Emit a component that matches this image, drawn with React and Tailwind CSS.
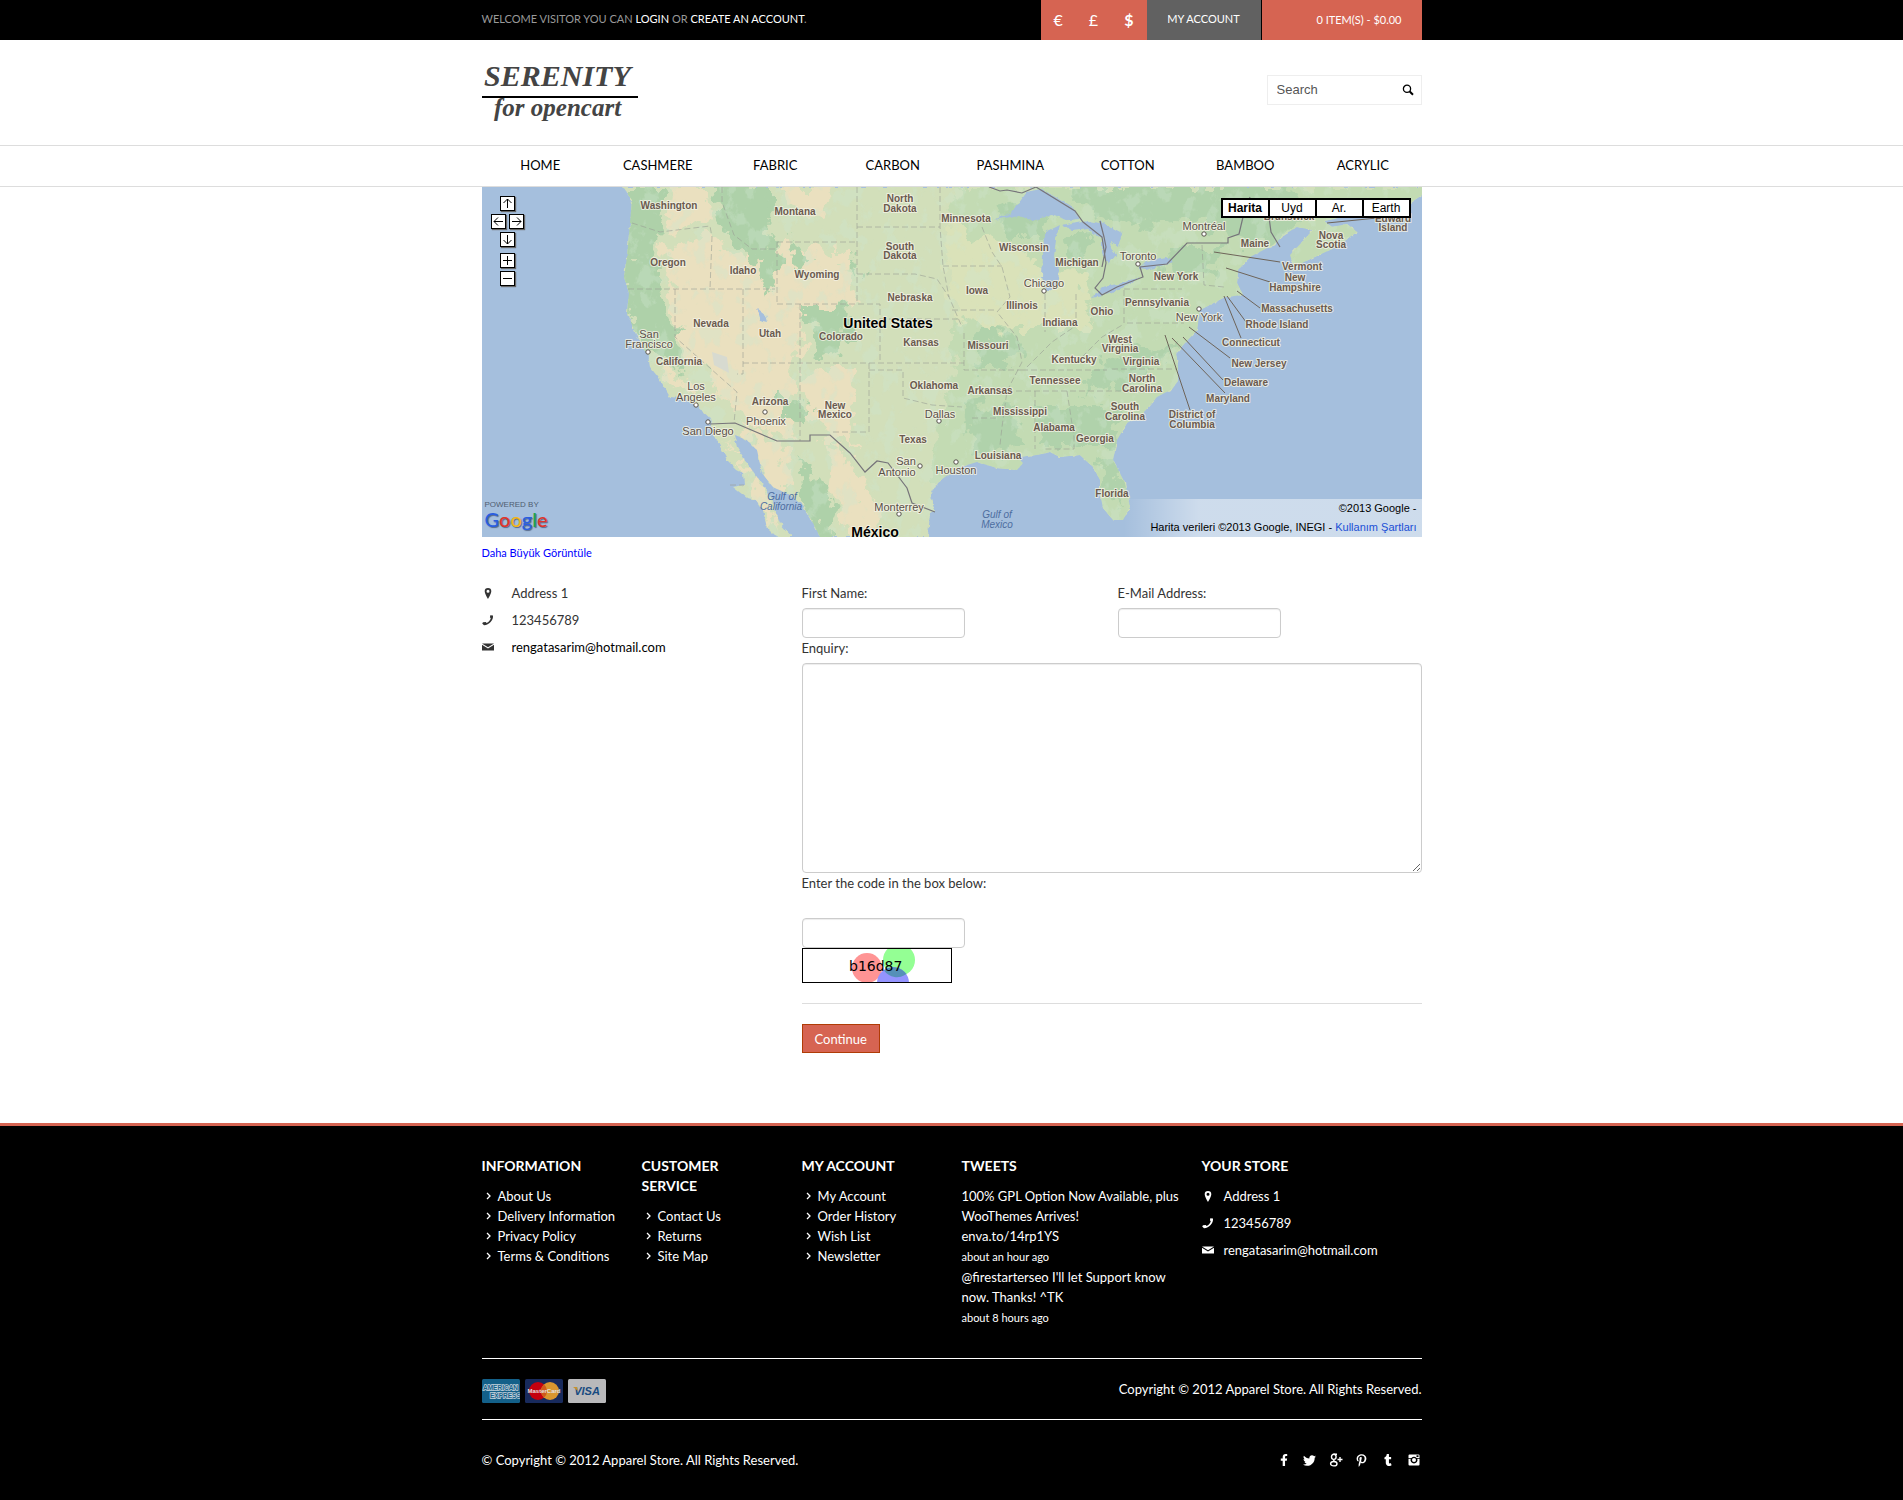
import { useState } from "react";
import { FaFacebookF, FaTwitter, FaPinterestP, FaTumblr } from "react-icons/fa";

const categories = ["HOME", "CASHMERE", "FABRIC", "CARBON", "PASHMINA", "COTTON", "BAMBOO", "ACRYLIC"];

const footerLinks = [
    { title: "INFORMATION", links: ["About Us", "Delivery Information", "Privacy Policy", "Terms & Conditions"] },
    { title: "CUSTOMER SERVICE", links: ["Contact Us", "Returns", "Site Map"] },
    { title: "MY ACCOUNT", links: ["My Account", "Order History", "Wish List", "Newsletter"] },
];

// [text, x, y]
const states = [
    ["Washington", 187, 18], ["Oregon", 186, 75], ["Idaho", 261, 83], ["Nevada", 229, 136], ["Utah", 288, 146],
    ["California", 197, 174], ["Arizona", 288, 214], ["Montana", 313, 24], ["North", 418, 11], ["Dakota", 418, 21],
    ["Minnesota", 484, 31], ["South", 418, 59], ["Dakota", 418, 68], ["Wisconsin", 542, 60], ["Michigan", 595, 75],
    ["Wyoming", 335, 87], ["Iowa", 495, 103], ["Nebraska", 428, 110], ["Illinois", 540, 118], ["Colorado", 359, 149],
    ["Kansas", 439, 155], ["Indiana", 578, 135], ["Ohio", 620, 124], ["Missouri", 506, 158], ["Kentucky", 592, 172],
    ["Tennessee", 573, 193], ["Oklahoma", 452, 198], ["Arkansas", 508, 203], ["New", 353, 218], ["Mexico", 353, 227],
    ["Mississippi", 538, 224], ["Alabama", 572, 240], ["Georgia", 613, 251], ["Texas", 431, 252], ["Louisiana", 516, 268],
    ["Maine", 773, 56], ["Nova", 849, 48], ["Scotia", 849, 57], ["Brunswick", 807, 29], ["Edward", 911, 31],
    ["Island", 911, 40], ["New York", 694, 89], ["Vermont", 820, 79], ["New", 813, 90], ["Hampshire", 813, 100],
    ["Pennsylvania", 675, 115], ["Massachusetts", 815, 121], ["Rhode Island", 795, 137], ["Connecticut", 769, 155],
    ["New Jersey", 777, 176], ["West", 638, 152], ["Virginia", 638, 161], ["Virginia", 659, 174], ["North", 660, 191],
    ["Carolina", 660, 201], ["Delaware", 764, 195], ["Maryland", 746, 211], ["South", 643, 219], ["Carolina", 643, 229],
    ["District of", 710, 227], ["Columbia", 710, 237], ["Florida", 630, 306],
];

const cities = [
    ["San", 167, 147], ["Francisco", 167, 157], ["Los", 214, 199], ["Angeles", 214, 210], ["San Diego", 226, 244],
    ["Phoenix", 284, 234], ["Chicago", 562, 96], ["Dallas", 458, 227], ["San", 424, 274], ["Antonio", 415, 285],
    ["Houston", 474, 283], ["Monterrey", 417, 320], ["Montréal", 722, 39], ["Toronto", 656, 69], ["New York", 717, 130],
];

const cityDots = [
    [166, 165], [214, 218], [226, 235], [283, 225], [562, 104], [457, 234], [438, 279], [474, 275],
    [417, 327], [722, 47], [656, 77], [717, 122],
];

const seas = [["Gulf of", 300, 309], ["California", 299, 319], ["Gulf of", 515, 327], ["Mexico", 515, 337]];

const land =
    "M140 0 L150 13 148 36 145 70 142 90 147 106 145 126 153 145 160 160 166 168 168 180 176 190 188 210 200 211 211 216 228 231 233 250 245 273 255 283 261 286 262 298 251 300 265 311 274 313 281 323 285 340 295 350 H310 L298 336 291 316 284 302 275 290 265 276 255 260 252 248 265 253 275 263 280 286 291 300 308 308 320 318 330 334 338 350 H446 L448 326 453 323 448 310 455 296 475 281 495 275 515 281 535 283 541 276 535 270 555 268 568 265 578 270 598 268 611 280 618 293 618 306 621 321 631 333 641 333 648 320 643 296 631 273 635 253 645 236 661 226 675 210 690 202 696 194 696 180 694 166 701 158 715 143 718 123 743 110 761 108 755 96 756 83 768 70 791 58 803 47 815 40 831 43 820 55 808 68 812 80 822 75 850 62 875 45 865 37 850 40 842 34 870 28 900 24 925 18 940 8 V0 Z";

function MapLabels({ items, className, size, dy }) {
    return items.map(([text, x, y], i) => (
        <text key={i} x={x} y={y + dy} fontSize={size} textAnchor="middle" className={className}>
            {text}
        </text>
    ));
}

function MapDrawing() {
    return (
        <svg viewBox="0 0 940 350" preserveAspectRatio="xMidYMid slice" className="block w-full h-[350px] font-['Liberation_Sans',Arial,sans-serif]" role="img" aria-label="Map of the United States">
            <defs>
                <clipPath id="land"><path d={land} /></clipPath>
                <filter id="rough" x="-10%" y="-10%" width="120%" height="120%">
                    <feTurbulence type="fractalNoise" baseFrequency="0.06" numOctaves="4" seed="4" result="n" />
                    <feDisplacementMap in="SourceGraphic" in2="n" scale="34" xChannelSelector="R" yChannelSelector="G" />
                </filter>
                <filter id="coast">
                    <feTurbulence type="fractalNoise" baseFrequency="0.15" numOctaves="3" seed="8" result="n" />
                    <feDisplacementMap in="SourceGraphic" in2="n" scale="5" xChannelSelector="R" yChannelSelector="G" />
                </filter>
                <filter id="speckle" x="0" y="0" width="100%" height="100%">
                    <feTurbulence type="fractalNoise" baseFrequency="0.07 0.05" numOctaves="5" seed="11" />
                    <feColorMatrix values="0 0 0 0 0.62  0 0 0 0 0.79  0 0 0 0 0.61  9 0 0 0 -4.9" />
                    <feComposite in2="SourceGraphic" operator="in" />
                </filter>
                <linearGradient id="copyFade">
                    <stop offset="0" stopColor="#fff" stopOpacity="0" />
                    <stop offset="0.25" stopColor="#fff" stopOpacity="0.45" />
                    <stop offset="1" stopColor="#fff" stopOpacity="0.45" />
                </linearGradient>
            </defs>
            <rect width="940" height="350" fill="#a5bfdd" />
            <path d={land} fill="#d2dfba" filter="url(#coast)" />

            {/* terrain */}
            <g clipPath="url(#land)">
                <g filter="url(#rough)">
                    <path d="M470 0H960V90L700 240 640 350H500L450 290 475 150Z" fill="#c3dbb3" />
                    <path d="M462 40L530 60 600 90 610 140 540 140 500 150 470 120Z" fill="#dae2b9" />
                    <path d="M190 0H225L228 35 185 45Z M180 60L230 50 290 95 300 60 330 60 370 90 375 115 320 125 310 250 270 240 245 215 195 150 190 95Z M265 60L290 55 295 90 265 95Z M300 0H350L340 30 310 25Z M335 180H375L370 260 340 250 320 200Z" fill="#eae0bf" />
                    <path d="M255 240L300 260 310 300 290 300 270 260Z M350 255L380 290 400 350H370L345 300Z M245 250L275 290 300 345 280 330 265 285Z M350 60L370 62 370 85 350 80Z M180 175L200 190 210 205 185 195Z" fill="#eae0bf" />
                    <path d="M140 0H180L175 100 195 150 205 185 165 165 145 120Z M230 0H290L285 45 300 70 285 110 270 70 240 45Z M325 120H370L365 160 335 170Z M310 50L330 70 315 90Z M315 270L345 300 355 350H335L325 310Z M300 205L330 220 325 240 300 230Z M370 70L380 80 375 95Z" fill="#aed1a9" />
                    <path d="M510 20L560 10 570 50 530 50Z M585 45L610 45 605 70 590 75Z M590 0H800L830 30 790 55 760 55 710 30 640 40 600 20Z M480 215L530 220 540 260 490 270Z M555 220L640 220 635 260 560 260Z M620 170L700 155 650 195 600 210Z M615 270L640 280 645 320 625 310Z M675 85L690 60 740 60 730 90Z M490 145L540 150 530 180 495 180Z" fill="#b0d2ab" />
                </g>
                <rect width="940" height="350" fill="#fff" filter="url(#speckle)" opacity="0.35" />
            </g>

            {/* lakes */}
            <g fill="#a5bfdd" filter="url(#coast)">
                <path d="M512 33L530 25 545 5 560 2 590 20 598 32 585 33 570 28 550 34 538 28Z" />
                <path d="M562 46L578 38 574 52 572 70 578 84 574 100 564 104 560 90Z" />
                <path d="M580 38L600 34 625 38 630 60 634 68 626 78 620 66 620 52 606 42 590 44Z M618 34L640 46 636 60 622 50Z" />
                <path d="M610 110L620 100 640 96 658 90 650 96 634 104 620 108Z" />
                <path d="M656 82L664 74 684 70 690 75 682 78 664 83Z" />
                <path d="M274 121L284 129 286 136 278 134Z" />
            </g>
            <path d="M230 165L245 170 247 186 232 178Z" fill="#d7dad0" />

            {/* state borders */}
            <path
                fill="none"
                stroke="#9a9f94"
                strokeOpacity="0.6"
                strokeWidth="1"
                strokeDasharray="6 3"
                d="M150 36L178 45 228 39 230 50 228 102M146 102H293M295 55V117M295 55H375M375 0V117M295 117H398V176M193 102V150L255 205 252 236M261 102V187H255M261 176H482M318 117V254M375 40H458M375 87H433L455 92 467 110 480 140M398 132H476M461 79H520M458 0V40L461 79 467 110M470 123H515M387 176V245H348M387 183H421V211L450 218 480 220M482 146V183H540M540 183H625M525 204H655M490 231H515M553 204V262M585 204L592 250V262H562M563 107V145M594 107V137M642 103V137M642 102H700M645 136H702M630 182H695M240 0V15L252 48 270 62 295 62M500 40L510 65 520 80 528 110 515 125 535 150 540 175 525 204 520 240 518 258M600 170L620 150 642 137M720 58L722 98 742 100M545 180L570 155 595 138M248 298H262"
            />
            {/* country borders */}
            <g fill="none" stroke="#76747a" strokeWidth="1.2">
                <path d="M507 0L518 4 525 3 540 6 554 0 593 24 601 35 620 50 624 76 621 91 613 101 620 108 635 100 661 90 658 80 685 77 705 56H746V51L757 47 761 30 768 10M787 30L789 45 798 60M618 34L622 50 624 60 620 80" />
                <path d="M228 237L253 236 295 254H328V248H348L368 266 383 285 395 274 406 276 425 301 430 316 453 325" />
            </g>
            {/* leader lines */}
            <path
                fill="none"
                stroke="#6e6459"
                d="M732 65L798 75M744 81L788 95M755 104L778 121M745 109L764 135M742 109L759 151M707 140L748 171M701 150L741 193M690 151L743 206M683 148L708 223M845 36L895 31"
            />
            {cityDots.map(([x, y]) => (
                <circle key={`${x}-${y}`} cx={x} cy={y} r="2.2" fill="#fff" stroke="#55504a" />
            ))}

            <g stroke="#f4f3e6" strokeWidth="2" strokeOpacity="0.8" paintOrder="stroke" strokeLinejoin="round">
                <MapLabels items={states} size={10} dy={4} className="font-bold fill-[#6a5a4f]" />
                <MapLabels items={cities} size={11} dy={4} className="fill-[#5a5048]" />
                <MapLabels items={[["United States", 406, 136], ["México", 393, 345]]} size={14} dy={5} className="font-bold fill-black" />
            </g>
            <MapLabels items={seas} size={10} dy={4} className="italic fill-[#4d6da0]" />

            <rect x="642" y="312" width="298" height="38" fill="url(#copyFade)" />
        </svg>
    );
}

function MapButton({ label, d }) {
    return (
        <button type="button" aria-label={label} className="block size-[15px] bg-white border border-black shadow-[1px_1px_1px_#666]">
            <svg viewBox="0 0 13 13" className="size-[13px]" fill="none" stroke="#000"><path d={d} /></svg>
        </button>
    );
}

function StoreMap() {
    const [type, setType] = useState("Harita");

    return (
        <div className="relative overflow-hidden">
            <MapDrawing />
            <div className="absolute left-[9px] top-[9px] w-[33px] flex flex-col items-center gap-[3px]">
                <MapButton label="Up" d="M6.5 11V2M2.5 6L6.5 2L10.5 6" />
                <div className="flex gap-[3px]">
                    <MapButton label="Left" d="M11 6.5H2M6 2.5L2 6.5L6 10.5" />
                    <MapButton label="Right" d="M2 6.5H11M7 2.5L11 6.5L7 10.5" />
                </div>
                <MapButton label="Down" d="M6.5 2V11M2.5 7L6.5 11L10.5 7" />
                <div className="flex flex-col gap-[3px] mt-[3px]">
                    <MapButton label="Zoom in" d="M2 6.5H11M6.5 2V11" />
                    <MapButton label="Zoom out" d="M2 6.5H11" />
                </div>
            </div>
            <div className="absolute right-[11px] top-[11px] flex border border-black font-['Liberation_Sans',Arial,sans-serif] text-xs">
                {["Harita", "Uyd", "Ar.", "Earth"].map((name) => (
                    <button
                        key={name}
                        type="button"
                        onClick={() => setType(name)}
                        className={`w-[47px] h-[18px] leading-4 bg-white border border-black text-black ${type === name ? "font-bold" : ""}`}
                    >
                        {name}
                    </button>
                ))}
            </div>
            <div className="absolute left-[3px] bottom-2 font-['Liberation_Sans',Arial,sans-serif]">
                <p className="text-[8px] leading-2 text-[#4f5d70]">POWERED BY</p>
                <p className="font-['Lato',sans-serif] text-[20px] leading-5 font-medium [text-shadow:1px_1px_1px_#55688a]">
                    <span className="text-[#2a5ee0]">G</span>
                    <span className="text-[#e0352b]">o</span>
                    <span className="text-[#f2b51c]">o</span>
                    <span className="text-[#2a5ee0]">g</span>
                    <span className="text-[#21a44a]">l</span>
                    <span className="text-[#e0352b]">e</span>
                </p>
            </div>
            <div className="absolute right-[5px] bottom-0 text-right text-[11px] leading-[19px] text-black font-['Liberation_Sans',Arial,sans-serif]">
                <p>©2013 Google -</p>
                <p>Harita verileri ©2013 Google, INEGI - <a href="#terms" className="text-[#1a4fd6]">Kullanım Şartları</a></p>
            </div>
        </div>
    );
}

function ContactList({ className, textClass, mailClass }) {
    return (
        <ul className={`space-y-[7px] leading-5 ${className}`}>
            <li className="flex items-center">
                <svg viewBox="0 0 12 12" className="size-3 shrink-0" fill="currentColor">
                    <path fillRule="evenodd" d="M6 1a3.3 3.3 0 0 1 3.3 3.3C9.3 6.8 6 12 6 12S2.7 6.8 2.7 4.3A3.3 3.3 0 0 1 6 1zM6 2.8a1.5 1.5 0 1 0 0 3 1.5 1.5 0 0 0 0-3z" />
                </svg>
                <span className={textClass}>Address 1</span>
            </li>
            <li className="flex items-center">
                <svg viewBox="0 0 12 12" className="size-3 shrink-0" fill="currentColor">
                    <path d="M8.3 1.2L11 1.5C11.6 6 7 11.3 2 11.2L0.2 9.6 1 8.3 3.8 8 4.6 8.9C6.5 8.3 8.5 6 8.8 4L7.9 3.4z" />
                </svg>
                <span className={textClass}>123456789</span>
            </li>
            <li className="flex items-center">
                <svg viewBox="0 0 12 12" className="size-3 shrink-0" fill="currentColor">
                    <path d="M0 2.5H12L6 6.3z" />
                    <path d="M0 3.8L6 7.4 12 3.8V9.5H0z" />
                </svg>
                <a href="mailto:rengatasarim@hotmail.com" className={`${textClass} ${mailClass}`}>rengatasarim@hotmail.com</a>
            </li>
        </ul>
    );
}

function PaymentCards() {
    return (
        <div className="flex gap-[5px] font-['Liberation_Sans',Arial,sans-serif]">
            <svg viewBox="0 0 38 24" className="w-[38px] h-6" role="img" aria-label="American Express">
                <rect width="38" height="24" rx="1.5" fill="#136089" />
                <g fill="#136089" stroke="#c3d3dc" strokeWidth="1.4" paintOrder="stroke" fontSize="6.5" fontWeight="bold">
                    <text x="1" y="11">AMERICAN</text>
                    <text x="8" y="19">EXPRESS</text>
                </g>
            </svg>
            <svg viewBox="0 0 38 24" className="w-[38px] h-6" role="img" aria-label="MasterCard">
                <rect width="38" height="24" rx="1.5" fill="#182a5c" />
                <circle cx="13" cy="12" r="9" fill="#c4000f" />
                <circle cx="25" cy="12" r="9" fill="#d9962f" />
                <path d="M19 5.3a9 9 0 0 1 0 13.4a9 9 0 0 1 0-13.4" fill="#d05a1c" />
                <text x="19" y="14" fontSize="6" fontWeight="bold" textAnchor="middle" fill="#e4e0e0">MasterCard</text>
            </svg>
            <svg viewBox="0 0 38 24" className="w-[38px] h-6" role="img" aria-label="Visa">
                <rect width="38" height="24" rx="1.5" fill="#b9b9bb" />
                <text x="19" y="16" fontSize="11" fontWeight="bold" fontStyle="italic" textAnchor="middle" fill="#174a80">VISA</text>
                <path d="M5 8h4l1 4z" fill="#c8922f" />
            </svg>
        </div>
    );
}

function Header() {
    return (
        <header>
            <div className="bg-black">
                <div className="max-w-[940px] mx-auto h-10 flex items-center justify-between text-[11px]">
                    <p className="pb-0.5 text-[#999]">
                        WELCOME VISITOR YOU CAN <a href="#login" className="text-white">LOGIN</a> OR{" "}
                        <a href="#register" className="text-white">CREATE AN ACCOUNT</a>.
                    </p>
                    <div className="flex h-10 text-white">
                        <div className="w-[106px] flex items-center bg-[#d66452] text-base">
                            <button type="button" className="flex-1">€</button>
                            <button type="button" className="flex-1">£</button>
                            <button type="button" className="flex-1 font-bold">$</button>
                        </div>
                        <a href="#account" className="w-[114px] pb-0.5 bg-[#616161] flex items-center justify-center">MY ACCOUNT</a>
                        <a href="#cart" className="w-40 ml-px pr-5 bg-[#d66452] flex items-center justify-end">0 ITEM(S) - $0.00</a>
                    </div>
                </div>
            </div>
            <div className="max-w-[940px] mx-auto h-[105px] flex items-center justify-between">
                <a href="#home" aria-label="Serenity for opencart">
                    <svg viewBox="0 0 156 60" className="w-[156px] h-[60px] overflow-visible font-['Liberation_Serif',cursive] italic font-bold" fill="#444">
                        <text x="2" y="23" fontSize="30">SERENITY</text>
                        <rect y="33" width="156" height="2" fill="#000" />
                        <text x="12" y="53" fontSize="25">for opencart</text>
                    </svg>
                </a>
                <div className="pb-[5px]">
                    <form className="w-[155px] h-[30px] pl-[9px] pr-[7px] border border-[#eee] flex items-center">
                        <input aria-label="Search" placeholder="Search" className="min-w-0 flex-1 font-['Liberation_Sans',Arial,sans-serif] text-[13px] placeholder-[#555] outline-none" />
                        <button type="submit" aria-label="Search" className="shrink-0 text-black">
                            <svg viewBox="0 0 12 12" className="size-3" fill="none" stroke="currentColor">
                                <circle cx="5" cy="4.8" r="3.6" strokeWidth="1.3" />
                                <path d="M7.7 7.5L11 10.8" strokeWidth="2" />
                            </svg>
                        </button>
                    </form>
                </div>
            </div>
            <nav className="border-y border-[#ddd]">
                <ul className="max-w-[940px] mx-auto h-10 grid grid-cols-8 items-center text-center text-[13px] text-black">
                    {categories.map((name) => (
                        <li key={name}><a href="#category">{name}</a></li>
                    ))}
                </ul>
            </nav>
        </header>
    );
}

const fieldClass = "block border border-[#ccc] rounded bg-white shadow-[inset_0_1px_1px_rgba(0,0,0,0.075)] px-1.5 outline-none focus:border-[#66afe9]";

function ContactForm() {
    return (
        <form onSubmit={(e) => e.preventDefault()} className="leading-5">
            <div className="grid grid-cols-[316px_1fr]">
                <div>
                    <label htmlFor="name" className="block mb-[5px]">First Name:</label>
                    <input id="name" type="text" className={`${fieldClass} w-[163px] h-[30px]`} />
                </div>
                <div>
                    <label htmlFor="email" className="block mb-[5px]">E-Mail Address:</label>
                    <input id="email" type="email" className={`${fieldClass} w-[163px] h-[30px]`} />
                </div>
            </div>
            <label htmlFor="enquiry" className="block mb-[5px]">Enquiry:</label>
            <textarea id="enquiry" className={`${fieldClass} w-full h-[210px]`} />
            <label htmlFor="captcha" className="block mb-[25px]">Enter the code in the box below:</label>
            <input id="captcha" type="text" className={`${fieldClass} w-[163px] h-[30px]`} />
            <svg viewBox="0 0 150 35" className="block w-[150px] h-[35px]" role="img" aria-label="Captcha">
                <rect width="150" height="35" fill="#fff" />
                <circle cx="65" cy="20" r="15" fill="#ff9494" />
                <circle cx="97" cy="12" r="16" fill="#94ff94" />
                <circle cx="91" cy="35" r="16" fill="#9494ff" />
                <path d="M82 22.5A16 16 0 0 1 104.5 26A16 16 0 0 1 82 22.5" fill="#5590b8" />
                <text x="47" y="23" fontSize="14" className="font-['DejaVu_Sans',sans-serif]" fill="#000">b16d87</text>
                <rect x="0.5" y="0.5" width="149" height="34" fill="none" stroke="#000" />
            </svg>
            <div className="mt-5 pt-5 border-t border-[#ddd]">
                <button type="submit" className="h-[29px] px-3 bg-[#d66452] border border-[#b03c06] text-[13px] text-white">Continue</button>
            </div>
        </form>
    );
}

function Footer() {
    return (
        <footer className="bg-black border-t-[3px] border-[#d66452] text-white leading-5">
            <div className="max-w-[940px] mx-auto pt-[30px] pb-[38px]">
                <div className="grid grid-cols-[140px_140px_140px_220px_220px] gap-x-5 h-[202px]">
                    {footerLinks.map((col) => (
                        <div key={col.title}>
                            <h3 className="mb-2.5 pr-8 text-sm leading-5 font-bold">{col.title}</h3>
                            <ul className="pl-1">
                                {col.links.map((link) => (
                                    <li key={link} className="flex items-center gap-[7px] whitespace-nowrap">
                                        <svg viewBox="0 0 5 8" className="w-[5px] h-2" fill="none" stroke="currentColor" strokeWidth="1.3"><path d="M1 1L4 4L1 7" /></svg>
                                        <a href="#link">{link}</a>
                                    </li>
                                ))}
                            </ul>
                        </div>
                    ))}
                    <div>
                        <h3 className="mb-2.5 text-sm leading-5 font-bold">TWEETS</h3>
                        <p>100% GPL Option Now Available, plus WooThemes Arrives!</p>
                        <p><a href="#tweet">enva.to/14rp1YS</a></p>
                        <p className="text-[11px] leading-[21px]">about an hour ago</p>
                        <p>@firestarterseo I'll let Support know now. Thanks! ^TK</p>
                        <p className="text-[11px] leading-[21px]">about 8 hours ago</p>
                    </div>
                    <div>
                        <h3 className="mb-2.5 text-sm leading-5 font-bold">YOUR STORE</h3>
                        <ContactList className="text-white" textClass="ml-2.5" mailClass="text-white" />
                    </div>
                </div>
                <div className="h-[62px] border-y border-white flex justify-between">
                    <div className="pt-5"><PaymentCards /></div>
                    <p className="pt-5">Copyright © 2012 Apparel Store. All Rights Reserved.</p>
                </div>
                <div className="mt-[30px] flex items-center justify-between">
                    <p>© Copyright © 2012 Apparel Store. All Rights Reserved.</p>
                    <div className="flex items-center gap-3 pr-px">
                        <a href="#facebook" aria-label="Facebook" className="w-3.5 flex justify-center"><FaFacebookF size={12} /></a>
                        <a href="#twitter" aria-label="Twitter" className="w-3.5 flex justify-center"><FaTwitter size={13} /></a>
                        <a href="#google" aria-label="Google Plus" className="w-3.5 flex justify-center">
                            <svg viewBox="0 0 14 14" className="size-3.5" fill="none" stroke="currentColor" strokeWidth="1.4">
                                <ellipse cx="4.8" cy="3.8" rx="2.3" ry="2.6" />
                                <ellipse cx="4.8" cy="10.7" rx="3.2" ry="2.2" />
                                <path d="M4.5 1.2H8M4.3 6.5Q4.5 7.8 6.5 9M8.5 6.5H13.5M11 4V9" />
                            </svg>
                        </a>
                        <a href="#pinterest" aria-label="Pinterest" className="w-3.5 flex justify-center"><FaPinterestP size={13} /></a>
                        <a href="#tumblr" aria-label="Tumblr" className="w-3.5 flex justify-center"><FaTumblr size={12} /></a>
                        <a href="#instagram" aria-label="Instagram" className="w-3.5 flex justify-center">
                            <svg viewBox="0 0 12 12" className="size-3" fill="currentColor">
                                <path fillRule="evenodd" d="M1.5 0.5h9a1 1 0 0 1 1 1V4H8.5A3.3 3.3 0 0 0 3.5 4H0.5V1.5a1 1 0 0 1 1-1zM8.5 1.3V3H10.5V1.3z" />
                                <path fillRule="evenodd" d="M0.5 4.8H2.7A3.5 3.5 0 1 0 9.3 4.8H11.5V10.5a1 1 0 0 1-1 1h-9a1 1 0 0 1-1-1z" />
                                <circle cx="6" cy="6" r="2" />
                            </svg>
                        </a>
                    </div>
                </div>
            </div>
        </footer>
    );
}

export default function App() {
    return (
        <div className="min-h-screen flex flex-col bg-white font-['Lato',sans-serif] text-[13px] text-[#333]">
            <Header />
            <main className="w-full max-w-[940px] mx-auto pb-[70px]">
                <StoreMap />
                <a href="#map" className="block mt-1.5 text-[11px] leading-5 text-[#00f]">Daha Büyük Görüntüle</a>
                <div className="mt-5 grid grid-cols-[300px_1fr] gap-x-5">
                    <ContactList className="text-[#333]" textClass="ml-[18px]" mailClass="text-black" />
                    <ContactForm />
                </div>
            </main>
            <Footer />
        </div>
    );
}
